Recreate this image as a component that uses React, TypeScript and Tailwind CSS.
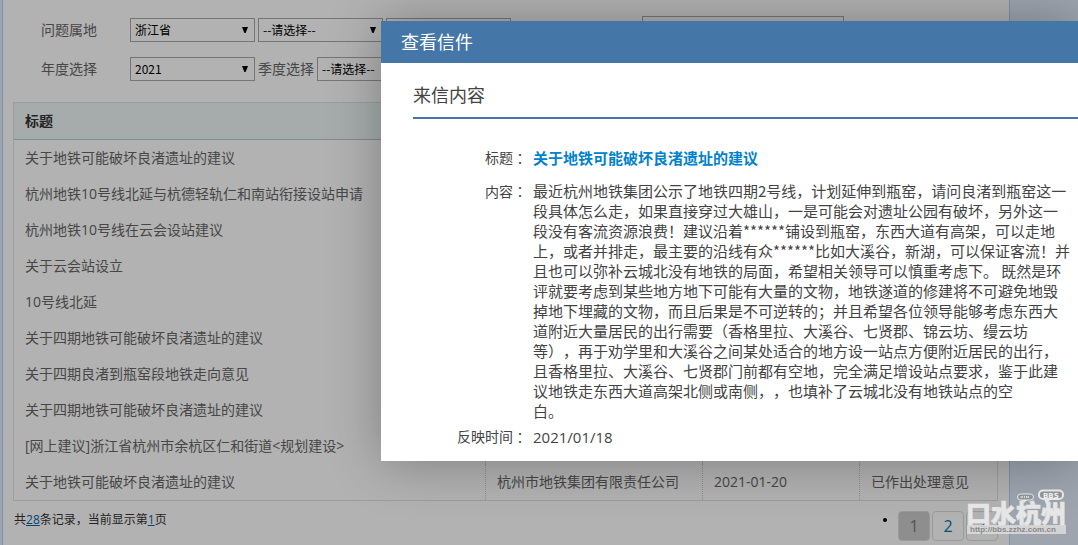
import { ReactNode } from "react";

const letters = [
  "关于地铁可能破坏良渚遗址的建议",
  "杭州地铁10号线北延与杭德轻轨仁和南站衔接设站申请",
  "杭州地铁10号线在云会设站建议",
  "关于云会站设立",
  "10号线北延",
  "关于四期地铁可能破坏良渚遗址的建议",
  "关于四期良渚到瓶窑段地铁走向意见",
  "关于四期地铁可能破坏良渚遗址的建议",
  "[网上建议]浙江省杭州市余杭区仁和街道<规划建设>",
  "关于地铁可能破坏良渚遗址的建议",
];

const lastRow = ["杭州市地铁集团有限责任公司", "2021-01-20", "已作出处理意见"];

const contentLines = [
  "最近杭州地铁集团公示了地铁四期2号线，计划延伸到瓶窑，请问良渚到瓶窑这一",
  "段具体怎么走，如果直接穿过大雄山，一是可能会对遗址公园有破坏，另外这一",
  "段没有客流资源浪费！建议沿着******铺设到瓶窑，东西大道有高架，可以走地",
  "上，或者并排走，最主要的沿线有众******比如大溪谷，新湖，可以保证客流！并",
  "且也可以弥补云城北没有地铁的局面，希望相关领导可以慎重考虑下。 既然是环",
  "评就要考虑到某些地方地下可能有大量的文物，地铁遂道的修建将不可避免地毁",
  "掉地下埋藏的文物，而且后果是不可逆转的；并且希望各位领导能够考虑东西大",
  "道附近大量居民的出行需要（香格里拉、大溪谷、七贤郡、锦云坊、缦云坊",
  "等），再于劝学里和大溪谷之间某处适合的地方设一站点方便附近居民的出行，",
  "且香格里拉、大溪谷、七贤郡门前都有空地，完全满足增设站点要求，鉴于此建",
  "议地铁走东西大道高架北侧或南侧，，也填补了云城北没有地铁站点的空",
  "白。",
];

function Select({ id, label, value }: { id: string; label?: string; value: string }) {
  return (
    <span className="relative block w-[125px] shrink-0">
      <select
        id={id}
        aria-label={label}
        className="block h-6 w-full appearance-none border border-[#a9a9a9] bg-white pl-1 font-['Noto_Sans_CJK_SC',sans-serif] text-xs text-black"
      >
        <option>{value}</option>
      </select>
      <svg viewBox="0 0 6 6" className="pointer-events-none absolute right-[7px] top-[9px] size-[6px]">
        <path d="M0 0h6L3.6 6H2.4z" fill="#000" />
      </svg>
    </span>
  );
}

function SearchForm() {
  return (
    <form className="flex flex-col gap-[15px] pl-[38px] pt-[18px] text-sm text-[#666]">
      <div className="flex items-center gap-[3px]">
        <label htmlFor="province" className="w-[86px] shrink-0">
          问题属地
        </label>
        <Select id="province" value="浙江省" />
        <Select id="city" label="市" value="--请选择--" />
        <Select id="district" label="区" value="" />
        <input aria-label="关键字" className="-mt-1 ml-32 h-6 w-[202px] border border-[#a9a9a9]" />
      </div>
      <div className="flex items-center gap-[3px]">
        <label htmlFor="year" className="w-[86px] shrink-0">
          年度选择
        </label>
        <Select id="year" value="2021" />
        <label htmlFor="quarter" className="shrink-0">
          季度选择
        </label>
        <Select id="quarter" value="--请选择--" />
      </div>
    </form>
  );
}

function LetterTable() {
  return (
    <table className="w-full table-fixed border-separate border-spacing-0 border border-[#dfe2e4] text-left text-sm text-[#666]">
      <colgroup>
        <col />
        <col className="w-[217px]" />
        <col className="w-[157px]" />
        <col className="w-[138px]" />
      </colgroup>
      <thead>
        <tr className="h-[37px] bg-[#eef6f7] text-[#333]">
          <th colSpan={4} className="border-b border-[#b4c7d1] px-[11px]">
            标题
          </th>
        </tr>
      </thead>
      <tbody>
        {letters.map((title, i) => (
          <tr key={i} className="h-9">
            <td className="truncate px-[11px]">{title}</td>
            {lastRow.map((cell) => (
              <td key={cell} className="truncate border-l border-dotted border-[#ccc] px-[11px]">
                {i === letters.length - 1 ? cell : ""}
              </td>
            ))}
          </tr>
        ))}
      </tbody>
    </table>
  );
}

function Pagination() {
  const page = "flex h-[30px] w-8 items-center justify-center rounded border border-[#ddd]";
  return (
    <div className="flex justify-between text-xs text-[#333]">
      <p className="pl-[1px] pt-[11px]">
        共
        <a href="#all" className="text-[#06a] underline">
          28
        </a>
        条记录，当前显示第
        <a href="#page" className="text-[#06a] underline">
          1
        </a>
        页
      </p>
      <div className="flex pt-[10px] text-base">
        <span className="mr-[11px] mt-[7px] size-1 rounded-full bg-black" />
        <div className="flex gap-[2px]">
          <button className={`${page} bg-[#ccc] text-[#777]`}>1</button>
          <button className={`${page} text-[#0077b3]`}>2</button>
          <button className={`${page} text-[#0077b3]`}>3</button>
        </div>
      </div>
    </div>
  );
}

function Field({ label, children }: { label: string; children: ReactNode }) {
  return (
    <div className="flex gap-[6px]">
      <dt className="flex h-5 w-[114px] shrink-0 justify-end text-sm leading-5">
        {label}
        <span className="font-['Noto_Sans_CJK_TC',sans-serif]" lang="zh-TW">
          ：
        </span>
      </dt>
      <dd className="whitespace-nowrap text-[15px] leading-5">{children}</dd>
    </div>
  );
}

function LetterDialog() {
  return (
    <section
      role="dialog"
      aria-labelledby="dialog-title"
      className="absolute left-[381px] right-0 top-[21px] bg-white pb-[14px] text-[#444] shadow-[1px_1px_50px_rgba(0,0,0,0.3)]"
    >
      <h2 id="dialog-title" className="bg-[#4476a7] pl-5 text-lg leading-[42px] text-white">
        查看信件
      </h2>
      <div className="pl-8">
        <h3 className="border-b-2 border-[#4476a7] pb-2 pt-[18px] text-lg">来信内容</h3>
        <dl className="pt-[29px]">
          <Field label="标题">
            <strong className="block text-[#0082cc]">关于地铁可能破坏良渚遗址的建议</strong>
          </Field>
          <div className="pb-[6px] pt-[13px] font-['Noto_Sans_CJK_SC',sans-serif]">
            <Field label="内容">
              {contentLines.map((line) => (
                <span key={line} className="block">
                  {line}
                </span>
              ))}
            </Field>
          </div>
          <Field label="反映时间">2021/01/18</Field>
        </dl>
      </div>
    </section>
  );
}

function Watermark() {
  return (
    <svg viewBox="0 0 104 50" className="absolute bottom-[7px] right-[10px] h-[50px] w-[104px]">
      <path d="M58 12l2 3 3-3z M80 11l2 5 5-5z" fill="#e6e6e6" />
      <rect x="53.5" y="6" width="16" height="6" rx="3" fill="#8f9398" stroke="#e6e6e6" />
      <path d="M57 10V8.5l1.5 1V8m2 2V8m2 2V8l2 2V8" fill="none" stroke="#e6e6e6" strokeWidth="0.8" />
      <rect x="75" y="2.5" width="24" height="8.5" rx="4" fill="#8f9398" stroke="#e6e6e6" strokeWidth="2" />
      <text x="79" y="9.5" fontSize="7" fontWeight="700" fontFamily="'DejaVu Sans', sans-serif" fill="#eee">
        BBS
      </text>
      <text
        x="2"
        y="35"
        fontSize="25"
        fontWeight="900"
        fontFamily="'Noto Sans CJK SC', sans-serif"
        fill="#e6e6e6"
        stroke="#e6e6e6"
        strokeWidth="0.6"
      >
        口水杭州
      </text>
      <rect x="3" y="37" width="99" height="9" fill="#d9d9d9" fillOpacity="0.9" />
      <text x="6" y="44" fontSize="8" fontWeight="700" fontFamily="'Liberation Sans', sans-serif" fill="#888">
        http://bbs.zzhz.com.cn
      </text>
    </svg>
  );
}

export default function App() {
  return (
    <div className="relative min-h-screen overflow-hidden bg-[#e2ecfb] pl-[2px] pr-[68px] font-['Open_Sans','Noto_Sans_CJK_SC',sans-serif] [text-spacing-trim:space-all]">
      <main className="min-h-screen border-x border-[#a9d5fa] bg-white">
        <SearchForm />
        <div className="pl-[10px] pr-[11px] pt-[21px]">
          <LetterTable />
          <Pagination />
        </div>
      </main>
      <div className="absolute inset-0 bg-black/30" />
      <LetterDialog />
      <Watermark />
    </div>
  );
}
